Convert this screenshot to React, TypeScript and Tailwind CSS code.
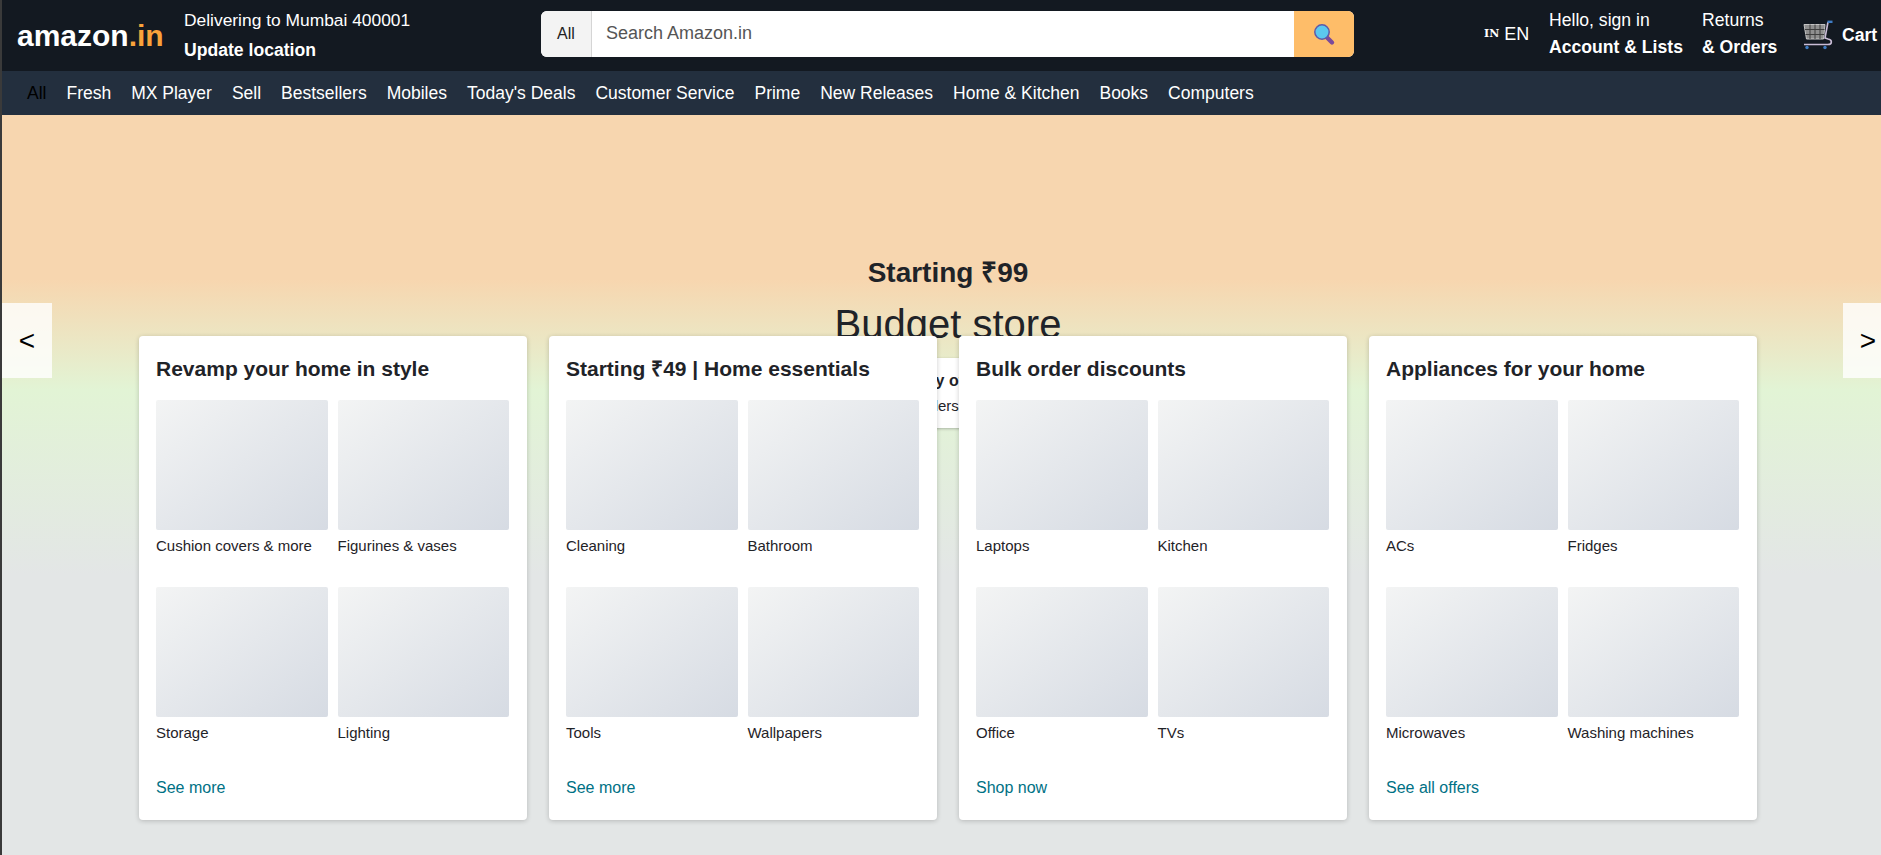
import React from 'react';

const NAV_ITEMS = [
  'Fresh',
  'MX Player',
  'Sell',
  'Bestsellers',
  'Mobiles',
  "Today's Deals",
  'Customer Service',
  'Prime',
  'New Releases',
  'Home & Kitchen',
  'Books',
  'Computers',
];

const CARDS = [
  {
    title: 'Revamp your home in style',
    items: ['Cushion covers & more', 'Figurines & vases', 'Storage', 'Lighting'],
    link: 'See more',
  },
  {
    title: 'Starting ₹49 | Home essentials',
    items: ['Cleaning', 'Bathroom', 'Tools', 'Wallpapers'],
    link: 'See more',
  },
  {
    title: 'Bulk order discounts',
    items: ['Laptops', 'Kitchen', 'Office', 'TVs'],
    link: 'Shop now',
  },
  {
    title: 'Appliances for your home',
    items: ['ACs', 'Fridges', 'Microwaves', 'Washing machines'],
    link: 'See all offers',
  },
];

const SearchGlyph = () => (
  <svg width="24" height="24" viewBox="0 0 24 24">
    <path d="M14.5 15 L20 20.5" stroke="#7b4a9b" strokeWidth="4.4" strokeLinecap="round" />
    <circle cx="10" cy="10" r="7.2" fill="#5cc8ee" stroke="#5f5aa8" strokeWidth="1.5" />
  </svg>
);

const CartGlyph = () => (
  <svg className="mb-[2px]" width="30" height="30" viewBox="0 0 30 30" fill="none">
    <path d="M1 4.5 H22 L20.5 19 H3.5 Z" fill="#8f8f8f" stroke="#c4c4c4" strokeWidth="1" />
    <path
      d="M2 9.5 H21.5 M2.5 14.5 H21 M7 4.5 V19 M12 4.5 V19 M17 4.5 V19"
      stroke="#3f3f3f"
      strokeWidth="1"
    />
    <path
      d="M1 24.5 H25 C29.5 24.5 29.5 19.5 25 19 L22 18 L25 2"
      stroke="#c9bcd6"
      strokeWidth="1.6"
    />
    <path d="M24.5 1.8 H29.5" stroke="#3f7cc4" strokeWidth="2.4" />
    <circle cx="4" cy="27.5" r="1.7" fill="#3f7cc4" />
    <circle cx="22" cy="27.5" r="1.7" fill="#3f7cc4" />
  </svg>
);

const Card: React.FC<{ title: string; items: string[]; link: string }> = ({
  title,
  items,
  link,
}) => (
  <div className="flex h-[484px] w-[388px] flex-col rounded-[4px] bg-white pr-[18px] pl-[17px] shadow-[0_1px_5px_rgba(0,0,0,0.2)]">
    <h2 className="mt-[19px] text-[21px] leading-[28px] font-bold text-[#1f2328]">{title}</h2>
    <div className="mt-[17px] grid grid-cols-2 gap-x-[10px] gap-y-[33px]">
      {items.map((item) => (
        <div key={item}>
          <div className="h-[130px] rounded-[2px] bg-linear-to-br from-[#f3f4f4] to-[#d6dbe3]" />
          <p className="mt-[7px] text-[15px] leading-[17px] text-[#1f2328]">{item}</p>
        </div>
      ))}
    </div>
    <a className="mt-[37px] text-[16px] leading-[20px] text-[#007185]">{link}</a>
  </div>
);

export default function App() {
  return (
    <div className="h-[855px] w-[1881px] overflow-hidden bg-[#3a3a3a] pl-[2px] font-['Liberation_Sans',Arial,sans-serif]">
      <div className="w-[1892px]">
        {/* top bar */}
        <header className="flex h-[71px] items-center bg-[#131921] pl-[15px] text-white">
          <div className="w-[167px] text-[30px] leading-none font-bold">
            amazon<span className="text-[#f9a23b]">.in</span>
          </div>
          <div className="mb-[2px] w-[357px] text-[17.6px]">
            <p className="text-[17.4px] leading-[30px]">Delivering to Mumbai 400001</p>
            <p className="leading-[30px] font-bold">Update location</p>
          </div>
          <div className="mb-[4px] flex h-[46px] w-[813px] overflow-hidden rounded-[6px] bg-white">
            <div className="flex w-[51px] items-center justify-center border-r border-[#d5d5d5] bg-[#f3f3f3] text-[16px] text-[#222]">
              All
            </div>
            <div className="flex flex-1 items-center pl-[14px] text-[18px] text-[#555]">
              Search Amazon.in
            </div>
            <div className="flex w-[60px] items-center justify-center bg-[#febd69]">
              <SearchGlyph />
            </div>
          </div>
          <div className="mb-[2px] ml-[130px] flex w-[65px] items-center gap-[5px]">
            <span className="font-['DejaVu_Serif',serif] text-[11px] font-bold">IN</span>
            <span className="text-[18px]">EN</span>
          </div>
          <div className="mb-[3px] w-[153px] text-[17.6px]">
            <p className="leading-[27px]">Hello, sign in</p>
            <p className="leading-[27px] font-bold">Account &amp; Lists</p>
          </div>
          <div className="mb-[3px] w-[101px] text-[17.6px]">
            <p className="leading-[27px]">Returns</p>
            <p className="leading-[27px] font-bold">&amp; Orders</p>
          </div>
          <div className="flex items-center gap-[9px]">
            <CartGlyph />
            <span className="text-[17.6px] font-bold">Cart</span>
          </div>
        </header>

        {/* category nav */}
        <nav className="flex h-[44px] items-center gap-[20px] bg-[#232f3e] pl-[25px] text-[17.5px] text-white">
          <span className="text-black">All</span>
          {NAV_ITEMS.map((item) => (
            <span key={item}>{item}</span>
          ))}
        </nav>

        <main className="relative h-[740px] bg-[linear-gradient(180deg,#f7d6af_0px,#f7d6af_165px,#e2f4d5_275px,#e3e6e6_460px)]">
          {/* hero */}
          <div className="flex h-[221px] flex-col items-center pt-[141px] text-[#1f2328]">
            <p className="text-[28px] leading-[34px] font-bold">Starting ₹99</p>
            <p className="mt-[10px] text-[40px] leading-[48px]">Budget store</p>
            <div className="absolute top-[243px] w-[340px] rounded-[2px] bg-white py-[10px] text-center shadow-[0_1px_3px_rgba(0,0,0,0.25)]">
              <p className="pl-[8px] text-[16px] leading-[25px] font-bold">Shop daily offers today</p>
              <p className="text-[15px] leading-[25px]">Top sellers for you</p>
            </div>
          </div>

          {/* cards */}
          <div className="relative flex justify-center gap-[22px]">
            {CARDS.map((card) => (
              <Card key={card.title} {...card} />
            ))}
          </div>

          <button className="absolute top-[188px] left-0 flex h-[75px] w-[50px] items-center justify-center bg-white/80 text-[28px] text-black">
            &lt;
          </button>
          <button className="absolute top-[188px] right-[1px] flex h-[75px] w-[50px] items-center justify-center bg-white/80 text-[28px] text-black">
            &gt;
          </button>
        </main>
      </div>
    </div>
  );
}
